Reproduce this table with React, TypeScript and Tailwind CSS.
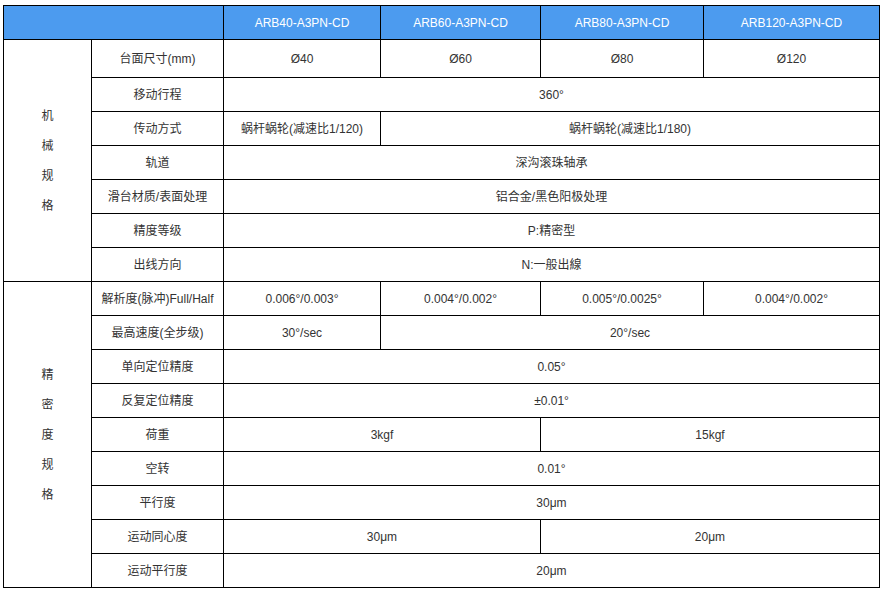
const font = { fontFamily: '"Liberation Sans", Arial, "Noto Sans CJK SC", sans-serif' };

type Cell = { text: string; span?: number };
type Row = { label: string; cells: Cell[]; tall?: boolean };

const models = ['ARB40-A3PN-CD', 'ARB60-A3PN-CD', 'ARB80-A3PN-CD', 'ARB120-A3PN-CD'];

const mechanical: Row[] = [
  { label: '台面尺寸(mm)', cells: [{ text: 'Ø40' }, { text: 'Ø60' }, { text: 'Ø80' }, { text: 'Ø120' }], tall: true },
  { label: '移动行程', cells: [{ text: '360°', span: 4 }] },
  { label: '传动方式', cells: [{ text: '蜗杆蜗轮(减速比1/120)' }, { text: '蜗杆蜗轮(减速比1/180)', span: 3 }] },
  { label: '轨道', cells: [{ text: '深沟滚珠轴承', span: 4 }] },
  { label: '滑台材质/表面处理', cells: [{ text: '铝合金/黑色阳极处理', span: 4 }] },
  { label: '精度等级', cells: [{ text: 'P:精密型', span: 4 }] },
  { label: '出线方向', cells: [{ text: 'N:一般出線', span: 4 }] },
];

const precision: Row[] = [
  {
    label: '解析度(脉冲)Full/Half',
    cells: [{ text: '0.006°/0.003°' }, { text: '0.004°/0.002°' }, { text: '0.005°/0.0025°' }, { text: '0.004°/0.002°' }],
  },
  { label: '最高速度(全步级)', cells: [{ text: '30°/sec' }, { text: '20°/sec', span: 3 }] },
  { label: '单向定位精度', cells: [{ text: '0.05°', span: 4 }] },
  { label: '反复定位精度', cells: [{ text: '±0.01°', span: 4 }] },
  { label: '荷重', cells: [{ text: '3kgf', span: 2 }, { text: '15kgf', span: 2 }] },
  { label: '空转', cells: [{ text: '0.01°', span: 4 }] },
  { label: '平行度', cells: [{ text: '30μm', span: 4 }] },
  { label: '运动同心度', cells: [{ text: '30μm', span: 2 }, { text: '20μm', span: 2 }] },
  { label: '运动平行度', cells: [{ text: '20μm', span: 4 }] },
];

const td = 'border border-black text-center align-middle p-0';

function Section({ title, rows }: { title: string; rows: Row[] }) {
  return (
    <>
      {rows.map((row, i) => (
        <tr key={row.label} className={row.tall ? 'h-[38px]' : 'h-[34px]'}>
          {i === 0 && (
            <td rowSpan={rows.length} className={td}>
              <div className="flex flex-col items-center leading-[30px]">
                {title.split('').map((ch, j) => (
                  <span key={j}>{ch}</span>
                ))}
              </div>
            </td>
          )}
          <td className={td}>{row.label}</td>
          {row.cells.map((c, j) => (
            <td key={j} colSpan={c.span} className={td}>
              {c.text}
            </td>
          ))}
        </tr>
      ))}
    </>
  );
}

export default function App() {
  return (
    <div className="w-[885px] h-[591px] bg-white pt-[5px] pl-[3px]" style={font}>
      <table className="table-fixed border-collapse w-[876px] text-[12px] text-[#333]">
        <colgroup>
          <col className="w-[88px]" />
          <col className="w-[132px]" />
          <col className="w-[157px]" />
          <col className="w-[160px]" />
          <col className="w-[163px]" />
          <col className="w-[176px]" />
        </colgroup>
        <tbody>
          <tr className="h-[34px] bg-[#4c9bef] text-white">
            <td colSpan={2} className={td}></td>
            {models.map((m) => (
              <td key={m} className={td}>
                {m}
              </td>
            ))}
          </tr>
          <Section title="机械规格" rows={mechanical} />
          <Section title="精密度规格" rows={precision} />
        </tbody>
      </table>
    </div>
  );
}
